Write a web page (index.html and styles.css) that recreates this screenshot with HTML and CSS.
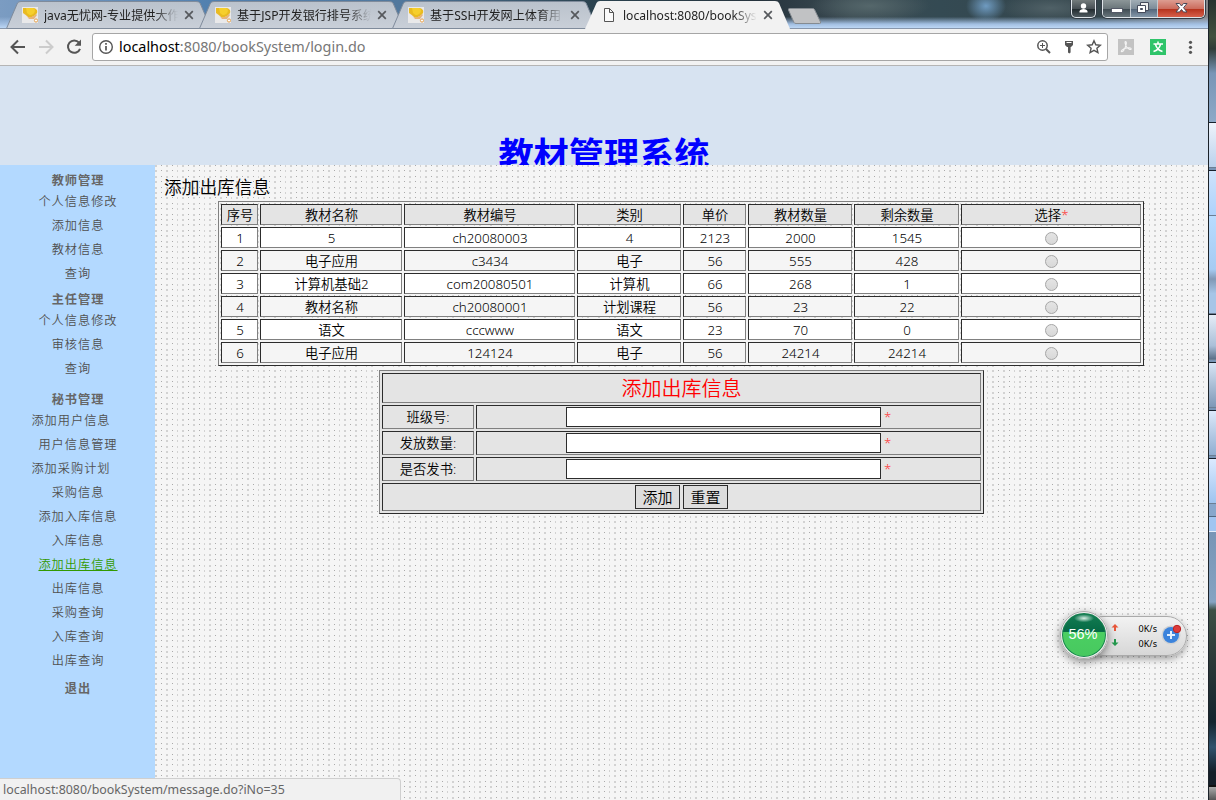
FILE: index.html
```
<!DOCTYPE html>
<html lang="zh-CN">
<head>
<meta charset="utf-8">
<title>教材管理系统</title>
<link rel="stylesheet" href="styles.css">
</head>
<body>
<svg class="defs" width="0" height="0">
  <defs>
    <linearGradient id="tabFill" x1="0" x2="0" y1="0" y2="1"><stop offset="0" stop-color="#bac2cc"/><stop offset="1" stop-color="#c9cfd8"/></linearGradient>
    <symbol id="tabShape" viewBox="0 0 206 29"><path d="M0.5 28.5 L11.500 3 Q12.500 1.500 15 1.500 H190 Q193 1.500 194 3 L205 28.500 Z" fill="url(#tabFill)" stroke="#7f8b9b"/></symbol>
    <symbol id="favicon" viewBox="0 0 16 16"><rect width="16" height="16" fill="#e9e9ea"/><path d="M1 1h9c4 0 6 2 5 5-1 2-3 3-5 4-2 1-3 1-5-1L1 6z" fill="#e9bb20"/><path d="M4 1h7c3 1 2 5 0 6-2 2-4 1-6-1z" fill="#f6cf2c"/><path d="M0 3l6 7c3 1 6-1 8-3l1 1-3 4H7z" fill="#e8b478"/><circle cx="14" cy="13.500" r="1.600" fill="#fff" stroke="#e5a04c"/></symbol>
    <symbol id="close" viewBox="0 0 10 10"><path d="M1.200 1.200l7.600 7.600M8.800 1.200L1.200 8.800" stroke="#56595d" stroke-width="1.700"/></symbol>
  </defs>
</svg>
<div class="screen">
  <div class="window">
    <div class="tabstrip">
      <div class="tab"><svg class="shape" width="206" height="29"><use href="#tabShape"/></svg><svg class="fav" width="16" height="16"><use href="#favicon"/></svg><span class="tab-title">java无忧网-专业提供大作</span><svg class="x" width="10" height="10"><use href="#close"/></svg></div>
      <div class="tab"><svg class="shape" width="206" height="29"><use href="#tabShape"/></svg><svg class="fav" width="16" height="16"><use href="#favicon"/></svg><span class="tab-title">基于JSP开发银行排号系统</span><svg class="x" width="10" height="10"><use href="#close"/></svg></div>
      <div class="tab"><svg class="shape" width="206" height="29"><use href="#tabShape"/></svg><svg class="fav" width="16" height="16"><use href="#favicon"/></svg><span class="tab-title">基于SSH开发网上体育用</span><svg class="x" width="10" height="10"><use href="#close"/></svg></div>
      <div class="tab active"><svg class="shape" width="206" height="29" viewBox="0 0 206 29"><path d="M0 29 L11.500 3 Q12.500 1 15 1 H190 Q193 1 194 3 L205 29 Z" fill="#f2f2f2"/></svg><svg class="fav" width="16" height="16" viewBox="0 0 16 16"><path d="M3.500 1.500h5l4 4v9h-9zM8.500 1.500v4h4" fill="#fafafa" stroke="#555"/></svg><span class="tab-title lat">localhost:8080/bookSys</span><svg class="x" width="10" height="10"><use href="#close"/></svg></div>
      <svg class="newtab" width="35" height="18" viewBox="0 0 35 18"><path d="M2.500 1.500h23q1.500 0 2 1L33.500 15q.5 1.500-1 1.500H9q-1.500 0-2-1L1.500 3q-.5-1.500 1-1.500z" fill="#c1c2c4" stroke="#858b91"/></svg>
      <div class="caption">
        <div class="cap user"><svg width="23" height="17" viewBox="0 0 23 17"><circle cx="11.500" cy="6" r="2.700" fill="#fff"/><path d="M7.500 12.500v-1c0-3.500 8-3.500 8 0v1z" fill="#fff"/></svg></div>
        <div class="cap group">
          <div class="min"><svg width="28" height="17" viewBox="0 0 28 17"><rect x="9.500" y="8.500" width="11" height="4" fill="#fff" stroke="#555a68"/></svg></div>
          <div class="max"><svg width="27" height="17" viewBox="0 0 27 17"><path d="M10.500 2.500h8v8h-8z" fill="#eee" stroke="#454b5b"/><path d="M7.500 5.500h8v7h-8z" fill="#fff" stroke="#454b5b"/><path d="M10.500 8.500h2v1h-2z" fill="#667" stroke="#454b5b"/></svg></div>
          <div class="cls"><svg width="46" height="17" viewBox="0 0 46 17"><path d="M18 3.500h3.500l2 2.500 2-2.500H29l-3.500 4.200 3.500 4.300h-3.500l-2-2.500-2 2.500H18l3.500-4.300z" fill="#fff" stroke="#4a4a58" stroke-width="1"/></svg></div>
        </div>
      </div>
    </div>
    <div class="toolbar">
      <svg width="92" height="37" viewBox="0 0 92 37" fill="none" stroke-width="2">
        <path d="M25 18H12M18 11.500L11.500 18l6.500 6.500" stroke="#555"/>
        <path d="M39 18h13M46 11.500l6.500 6.500-6.500 6.500" stroke="#ccc"/>
        <path d="M79 13.700A6.200 6.200 0 1 0 80 19.800" stroke="#555"/>
        <path d="M81 10.500v6.300h-6.300z" fill="#555"/>
      </svg>
      <div class="omnibox">
        <svg width="16" height="16" viewBox="0 0 16 16"><circle cx="8" cy="8" r="6.300" fill="none" stroke="#555" stroke-width="1.400"/><path d="M8 7v4.500M8 4v1.700" stroke="#555" stroke-width="1.700"/></svg>
        <span class="url"><b>localhost</b>:8080/bookSystem/login.do</span>
        <svg class="omni-icons" width="72" height="20" viewBox="0 0 72 20" fill="none" stroke="#555">
          <circle cx="7.500" cy="8.500" r="4.700" stroke-width="1.500"/><path d="M11 12l4 4" stroke-width="2"/><path d="M7.500 6v5M5 8.500h5" stroke-width="1"/>
          <path d="M30 4h8v4l-2 2h-4l-2-2zM33 10h2.600v5.500l-1.300 1-1.300-1z" fill="#555" stroke="none"/><path d="M31.500 5.500h5" stroke="#fff"/>
          <path d="M59 3.700l1.800 4.100 4.500.4-3.400 3 1 4.400-3.900-2.300-3.900 2.300 1-4.400-3.400-3 4.500-.4z" stroke-width="1.400"/>
        </svg>
      </div>
      <svg width="100" height="37" viewBox="0 0 100 37">
        <rect x="10" y="10" width="16" height="16" fill="#c3c3c3"/><path d="M17.500 12.500c1.500 0 .8 3.500-.3 6-1 2.300-2.500 4.500-3.600 4.200-1.200-.4 1-2.700 4-3.500 2.600-.7 5.500-.5 5.600.6.100 1.200-2.500.7-4.200-1.300-1.700-2-2.500-6-1.500-6z" fill="none" stroke="#f5f5f5" stroke-width="1.100"/>
        <rect x="42" y="10" width="16" height="16" fill="#2fc46a"/><path d="M45.500 15h9.500M50 12.500v2.500M52.500 15.500c-1 3.500-3.500 6-7 7M47.500 15.500c1 3.500 3.500 6 7 7" fill="none" stroke="#fff" stroke-width="1.500"/>
        <g fill="#555"><circle cx="82.500" cy="13.300" r="1.600"/><circle cx="82.500" cy="18.300" r="1.600"/><circle cx="82.500" cy="23.300" r="1.600"/></g>
      </svg>
    </div>
    <div class="banner"><h1>教材管理系统</h1></div>
    <div class="page">
      <div class="sidebar">
        <div class="group-title">教师管理</div>
        <a>个人信息修改</a><a>添加信息</a><a>教材信息</a><a>查询</a>
        <div class="group-title second">主任管理</div>
        <a>个人信息修改</a><a>审核信息</a><a>查询</a>
        <div class="group-title third">秘书管理</div>
        <a class="out">添加用户信息</a><a>用户信息管理</a><a class="out">添加采购计划</a><a>采购信息</a><a>添加入库信息</a><a>入库信息</a><a class="hover">添加出库信息</a><a>出库信息</a><a>采购查询</a><a>入库查询</a><a>出库查询</a>
        <div class="group-title quit">退出</div>
      </div>
      <div class="content">
        <div class="heading">添加出库信息</div>
        <table class="books">
          <colgroup><col class="c1"><col class="c2"><col class="c3"><col class="c4"><col class="c5"><col class="c6"><col class="c7"><col class="c8"></colgroup>
          <tr class="head"><td>序号</td><td>教材名称</td><td>教材编号</td><td>类别</td><td>单价</td><td>教材数量</td><td>剩余数量</td><td>选择<i>*</i></td></tr>
          <tr class="odd"><td>1</td><td>5</td><td>ch20080003</td><td>4</td><td>2123</td><td>2000</td><td>1545</td><td><input type="radio" name="book"></td></tr>
          <tr><td>2</td><td>电子应用</td><td>c3434</td><td>电子</td><td>56</td><td>555</td><td>428</td><td><input type="radio" name="book"></td></tr>
          <tr class="odd"><td>3</td><td>计算机基础2</td><td>com20080501</td><td>计算机</td><td>66</td><td>268</td><td>1</td><td><input type="radio" name="book"></td></tr>
          <tr><td>4</td><td>教材名称</td><td>ch20080001</td><td>计划课程</td><td>56</td><td>23</td><td>22</td><td><input type="radio" name="book"></td></tr>
          <tr class="odd"><td>5</td><td>语文</td><td>cccwww</td><td>语文</td><td>23</td><td>70</td><td>0</td><td><input type="radio" name="book"></td></tr>
          <tr><td>6</td><td>电子应用</td><td>124124</td><td>电子</td><td>56</td><td>24214</td><td>24214</td><td><input type="radio" name="book"></td></tr>
        </table>
        <table class="form">
          <colgroup><col class="f1"><col class="f2"></colgroup>
          <tr class="title"><td colspan="2">添加出库信息</td></tr>
          <tr><td>班级号:</td><td><div class="field"><input type="text"><i>*</i></div></td></tr>
          <tr><td>发放数量:</td><td><div class="field"><input type="text"><i>*</i></div></td></tr>
          <tr><td>是否发书:</td><td><div class="field"><input type="text"><i>*</i></div></td></tr>
          <tr class="actions"><td colspan="2"><div class="buttons"><button>添加</button><button>重置</button></div></td></tr>
        </table>
      </div>
    </div>
    <div class="status">localhost:8080/bookSystem/message.do?iNo=35</div>
    <div class="meter">
      <div class="ball"><span>56%</span></div>
      <div class="pill">
        <svg width="8" height="24" viewBox="0 0 8 24"><path d="M4 0l3.500 3.500H5V7H3V3.500H.5z" fill="#e8573a"/><path d="M4 22l3.500-3.500H5V15H3v3.500H.5z" fill="#249a4e"/></svg>
        <div class="rates"><span>0K/s</span><span>0K/s</span></div>
        <svg width="22" height="22" viewBox="0 0 22 22"><circle cx="10" cy="12" r="9.500" fill="#d0d2d4"/><circle cx="10" cy="12" r="8" fill="#3b83dc"/><path d="M10 8v8M6 12h8" stroke="#e3f0ff" stroke-width="2"/><circle cx="16" cy="6" r="3.700" fill="#dc3b3b" stroke="#b22"/></svg>
      </div>
    </div>
  </div>
  <div class="desktop">
    <div class="d0"></div><div class="blk b1"></div><div class="blk b2"></div><div class="blk b3"></div><div class="blk b4"></div><div class="blk b5"></div><div class="blk b6"></div><div class="blk b7"></div><div class="d1"></div><div class="d2"></div><div class="d3"></div>
  </div>
</div>
</body>
</html>
```
FILE: styles.css
```
* { box-sizing: border-box; }
body { margin: 0; width: 1216px; height: 800px; overflow: hidden; font-family: "Noto Sans", "Noto Sans CJK SC", sans-serif; font-size: 13.3px; color: #000; }
i { font-style: normal; color: #f33; }
svg { display: block; flex: none; }
.defs { position: absolute; }
.screen { display: flex; width: 1216px; height: 800px; }
.window { position: relative; width: 1208px; height: 800px; display: flex; flex-direction: column; overflow: hidden; }

.tabstrip { height: 29px; flex: none; display: flex; align-items: flex-start; padding-left: 6px; border-bottom: 1px solid #8796ab;
  background: radial-gradient(ellipse 20px 16px at 986px 6px, #6f9bc1, transparent), linear-gradient(180deg, transparent 60%, #a2bfe2 86%, #bdd7f4), radial-gradient(ellipse 60px 16px at 870px 6px, #55676b, transparent), radial-gradient(ellipse 50px 14px at 1050px 8px, #506167, transparent), linear-gradient(90deg, #7b9cc2 0, #507fae 220px, #51789d 400px, #2b4350 590px, #26333d 760px, #3b4b52 850px, #344a53 940px, #35454b 1100px, #85878a 1208px); }
.tab { position: relative; width: 193px; height: 29px; flex: none; display: flex; align-items: center; padding: 2px 0 0 16px; }
.tab.active { z-index: 2; }
.shape { position: absolute; left: 0; top: 0; }
.fav, .tab-title, .x { position: relative; }
.fav { margin: -1px 6px 0 0; }
.tab-title { width: 134px; overflow: hidden; white-space: nowrap; font-size: 12.100px; line-height: 20px; color: #222; -webkit-mask-image: linear-gradient(90deg, #000 82%, transparent); mask-image: linear-gradient(90deg, #000 82%, transparent); }
.x { margin: -1px 0 0 6px; }
.newtab { margin: 7px 0 0 9px; }
.caption { display: flex; margin-left: auto; padding-right: 3px; gap: 6px; }
.cap { height: 18px; overflow: hidden; border: 1px solid #dfe5ea; border-top: 0; border-radius: 0 0 5px 5px; box-shadow: 0 0 0 1px #333c46; background: linear-gradient(#737b7c, #485055 50%, #20292d 52%, #4f5a60); }
.cap.user { width: 25px; }
.group { display: flex; width: 103px; }
.min { width: 28px; border-right: 1px solid #c2c9cf; background: linear-gradient(#8c9698, #6b767b 50%, #3e4a51 52%, #68757c); }
.max { width: 27px; border-right: 1px solid #c2c9cf; background: linear-gradient(#a1adb5, #7d8c99 50%, #526478 52%, #8497a9); }
.min svg, .max svg { margin-left: -1px; }
.cls { flex: 1; background: linear-gradient(#dd9d91, #cc6d5e 50%, #b4311b 52%, #d6604b); }

.toolbar { height: 37px; flex: none; display: flex; background: #f2f2f2; border-bottom: 1px solid #b5b5b5; }
.omnibox { width: 1016px; height: 28px; margin-top: 4px; display: flex; align-items: center; padding: 0 0 0 5px; border: 1px solid #a6a6a6; border-radius: 3px; background: #fff; }
.url { margin-left: 5px; font-size: 14.4px; line-height: 20px; color: #777; white-space: nowrap; }
.url b { font-weight: 400; color: #000; }
.omni-icons { margin-left: auto; margin-right: 0; }

.banner { height: 99px; flex: none; overflow: hidden; background: #d7e3f1; }
.banner h1 { margin: 60px 0 0; text-align: center; font: 700 35.2px/54px "Noto Sans CJK SC", sans-serif; color: #00f; }
.page { flex: 1; display: flex; min-height: 0; }
.sidebar { width: 155px; flex: none; padding-top: 6px; background: #b3d9ff; text-align: center; font-family: "Noto Sans CJK SC", sans-serif; font-weight: 350; font-size: 12.200px; letter-spacing: 1px; }
.sidebar a { display: block; height: 24px; line-height: 24px; padding-left: 1px; color: #505050; }
.sidebar .out { padding-right: 14px; }
.sidebar .hover { color: #390; text-decoration: underline; }
.group-title { height: 18px; line-height: 18px; padding-left: 1px; font-weight: 700; color: #666; }
.second { margin-top: 5px; }
.third { margin-top: 10px; }
.quit { margin-top: 7px; }
.content { flex: 1; padding-top: 8px; font-weight: 350; background: #f5f5f5 url("data:image/svg+xml,%3Csvg xmlns='http://www.w3.org/2000/svg' width='27' height='27'%3E%3Cdefs%3E%3Cg id='r'%3E%3Cpath d='M0 0h2v2H0zM11 0h2v2h-2zM22 0h1v2h-1z' fill='%23d2d2d2'/%3E%3Cpath d='M6 0h1v1H6zM17 0h1v1h-1z' fill='%23aaa'/%3E%3C/g%3E%3C/defs%3E%3Cuse href='%23r'/%3E%3Cuse href='%23r' y='5'/%3E%3Cuse href='%23r' y='11'/%3E%3Cuse href='%23r' y='16'/%3E%3Cuse href='%23r' y='22'/%3E%3C/svg%3E"); }
.heading { height: 28px; padding-left: 9px; font-family: "Noto Sans CJK SC", sans-serif; font-size: 17.700px; line-height: 26px; }

table { table-layout: fixed; border-collapse: separate; border-spacing: 2px; border: 1px solid; border-color: #808080 #2c2c2c #2c2c2c #808080; font-weight: inherit; }
td { padding: 0; border: 1px solid; border-color: #2c2c2c #808080 #808080 #2c2c2c; text-align: center; white-space: nowrap; line-height: 18px; overflow: hidden; }
.books { width: 926px; height: 165px; margin-left: 63px; font-family: "Noto Sans", "Noto Sans CJK SC", sans-serif; }
.books td { height: 21px; padding-left: 1px; background: #f5f5f5; }
.books .odd td { background: #fff; }
.books .head td { background: #e4e4e4; }
.c1 { width: 37px; } .c2 { width: 142px; } .c3 { width: 171px; } .c4 { width: 104px; }
.c5 { width: 63px; } .c6 { width: 104px; } .c7 { width: 105px; } .c8 { width: 180px; }
input[type=radio] { appearance: none; display: block; width: 13px; height: 13px; margin: 2px auto 0; border: 1px solid #a5a5a5; border-radius: 50%; background: linear-gradient(#e4e4e4, #d8d8d8); }
.form { width: 605px; height: 144px; margin: 4px 0 0 224px; background: #e4e4e4; }
.form td { height: 24px; background: #e4e4e4; }
.form .title td { height: 30px; padding-top: 2px; font-size: 20px; line-height: 26px; color: #f00; }
.form .actions td { height: 28px; }
.f1 { width: 92px; } .f2 { width: 505px; }
.field { display: flex; align-items: center; height: 20px; padding-left: 89px; gap: 3px; }
.field input { width: 315px; height: 20px; border: 1px solid #2c2c2c; background: #fff; }
.buttons { display: flex; justify-content: center; gap: 3px; }
.buttons button { width: 45px; height: 24px; padding: 0; border: 1px solid #2c2c2c; background: #ddd; font: 350 15px/20px "Noto Sans CJK SC", sans-serif; color: #000; }

.status { position: absolute; left: 0; bottom: 0; width: 401px; height: 22px; padding-left: 3px; border: solid #cfcfcf; border-width: 1px 1px 0 0; border-radius: 0 4px 0 0; background: #f1f1f1; font-size: 12.400px; line-height: 21px; color: #666; }
.meter { position: absolute; left: 1060px; top: 611px; width: 128px; height: 48px; }
.ball { position: absolute; z-index: 1; left: 0; top: 0; width: 48px; height: 48px; border: 2px solid #eee; border-radius: 50%; outline: 1px solid #aaa; outline-offset: -1px; display: flex; align-items: center; justify-content: center; box-shadow: inset 0 0 0 1px #17804f, 0 3px 8px rgba(0,0,0,.45); background: radial-gradient(ellipse 10px 4px at 50% 12%, #d9eee5, transparent), linear-gradient(#147d53 0, #056a45 42%, #4bcf62 43%, #47c85f); }
.ball span { padding: 0 2px 2px 0; font: 14.500px/18px "Liberation Sans", sans-serif; color: #fff; }
.pill { position: absolute; left: 23px; top: 5px; width: 104px; height: 40px; display: flex; align-items: center; padding-left: 27px; border: 1px solid #aaa; border-radius: 20px; background: linear-gradient(#f2f2f2, #d7d7d7); box-shadow: 0 3px 7px rgba(0,0,0,.35); }
.rates { width: 38px; display: flex; flex-direction: column; text-align: right; font-size: 9px; line-height: 15px; }
.pill svg:last-child { margin: -5px 0 0 4px; }

.desktop { width: 8px; display: flex; flex-direction: column; overflow: hidden; border-left: 1px solid #1b2229; background: #7895b6; }
.d0 { height: 122px; background: linear-gradient(#27332f 0, #42513f 30%, #303c38 40%, #7895b6 60%, #8da9c7); }
.blk { flex: none; border: solid #17212c; border-width: 1px 0 0; border-bottom: 1px solid #6c7f94; }
.b1 { height: 46px; margin-bottom: 2px; background: linear-gradient(#eef3fb, #bad1ec); }
.b2 { height: 46px; background: linear-gradient(#cfe3fb, #aed2fb); }
.b3 { height: 98px; border-top: 0; background: linear-gradient(#b9dcff, #a6cbf2 55%, #8198b5 65%, #a6c5e7 80%); }
.b4 { height: 46px; margin-bottom: 2px; background: linear-gradient(#e5edf7, #aabfd8 70%, #5b7088); }
.b5 { height: 46px; margin-bottom: 2px; background: linear-gradient(#d8e5f5, #7e98b7); }
.b6 { height: 46px; margin-bottom: 2px; background: linear-gradient(#dce9fa, #90aed1); }
.b7 { height: 46px; background: linear-gradient(#dceaff, #9fc4ef); }
.d1 { height: 28px; border-bottom: 1px solid #e5eefb; background: linear-gradient(#88a7cc 12px, #51677f 12px, #51677f 13px, #a1c5f1 13px); }
.d2 { flex: 1; background: linear-gradient(#7895b6 0, #86a3c2 70px, #3d5045 78px, #2d3a38 125px, #14242e 190px, #31536d 215px, #141e28 240px); }
.d3 { height: 15px; border-top: 2px solid #111; background: linear-gradient(#aaa, #555); }
```
